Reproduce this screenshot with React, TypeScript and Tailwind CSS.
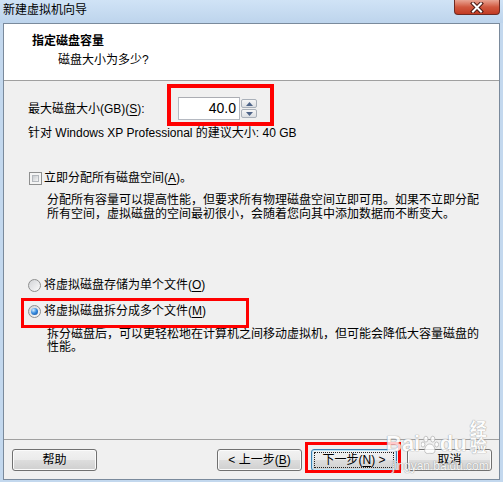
import React from "react";

const font = "font-['Liberation_Sans','Noto_Sans_CJK_SC',sans-serif]";

// underlined access key letter
const Mn = ({ k }: { k: string }) => <span className="underline decoration-1 underline-offset-[2px]">{k}</span>;

const Checkbox = () => (
  <div className="w-[13px] h-[13px] border border-[#8e8f8f] bg-[#f4f4f4] p-[2px]">
    <div className="w-full h-full border border-[#b4b8bd] bg-gradient-to-br from-[#c9ccd0] to-[#f5f5f5]" />
  </div>
);

const Radio = ({ checked = false }: { checked?: boolean }) => (
  <div className="w-[13px] h-[13px] rounded-full border border-[#8e8f8f] bg-gradient-to-br from-[#d2d4d7] to-[#fbfbfb] flex items-center justify-center">
    {checked && (
      <div className="w-[7px] h-[7px] rounded-full bg-[radial-gradient(circle_at_35%_30%,#d5efff_0%,#3a8ee0_45%,#0c4a9a_100%)]" />
    )}
  </div>
);

const WinButton = ({
  children,
  primary = false,
  className = "",
}: {
  children: React.ReactNode;
  primary?: boolean;
  className?: string;
}) => (
  <div
    className={`h-[22px] rounded-[3px] border p-[2px] bg-[linear-gradient(to_bottom,#f2f2f2_0%,#ebebeb_48%,#dddddd_52%,#cfcfcf_100%)] ${
      primary ? "border-[#3c7fb1] shadow-[inset_0_0_0_1px_#bfe6fa]" : "border-[#707070] shadow-[inset_0_0_0_1px_#fbfbfb]"
    } ${className}`}
  >
    <div
      className={`h-full flex items-center justify-center text-[12px] leading-none ${
        primary ? "border border-dotted border-[#222]" : ""
      }`}
    >
      {children}
    </div>
  </div>
);

const SpinBtn = ({ up }: { up: boolean }) => (
  <div className="w-[16px] h-[9px] rounded-[2px] border border-[#a9b0b9] bg-gradient-to-b from-[#f6f6f6] to-[#dcdfe3] flex items-center justify-center">
    <svg width="7" height="4" viewBox="0 0 7 4">
      <polygon points={up ? "3.5,0 7,4 0,4" : "0,0 7,0 3.5,4"} fill="#4e6488" />
    </svg>
  </div>
);

const Paw = () => (
  <svg width="18" height="20" viewBox="0 0 18 20" className="mx-[1px]">
    <g fill="#ffffff" stroke="#a8a8a8" strokeWidth="0.8">
      <ellipse cx="5" cy="4" rx="2.2" ry="3" />
      <ellipse cx="12" cy="4" rx="2.2" ry="3" />
      <ellipse cx="2" cy="9.5" rx="2" ry="2.6" />
      <ellipse cx="16" cy="9.5" rx="2" ry="2.6" />
      <path d="M9 9 C5 9 3 14 4 17 C5 19.5 8 18.5 9 18.5 C10 18.5 13 19.5 14 17 C15 14 13 9 9 9 Z" />
    </g>
  </svg>
);

export default function App() {
  return (
    <div className={`relative w-[503px] h-[482px] flex flex-col bg-[#c3d8ee] overflow-hidden text-[12px] text-black ${font}`}>
      {/* Title bar */}
      <div className="h-[23px] flex items-start justify-between bg-gradient-to-b from-[#d0e3f6] to-[#bdd4ec]">
        <span className="ml-[3px] mt-[2px] leading-[16px]">新建虚拟机向导</span>
        <div className="mr-[3px] w-[46px] h-[15px] rounded-b-[4px] border border-t-0 border-[#6e2a22] bg-gradient-to-b from-[#e8a493] via-[#d0583f] to-[#c23a22] flex items-center justify-center">
          <svg width="14" height="11" viewBox="0 0 14 11">
            <path d="M3 1.5 L11 9.5 M11 1.5 L3 9.5" stroke="#4a1a14" strokeWidth="4" strokeLinecap="square" />
            <path d="M3 1.5 L11 9.5 M11 1.5 L3 9.5" stroke="#ffffff" strokeWidth="2" strokeLinecap="square" />
          </svg>
        </div>
      </div>

      {/* Client area */}
      <div className="flex-1 flex flex-col mx-[3px] mb-[2px] border border-[#7a8a9c] bg-[#f0f0f0]">
        {/* Header */}
        <div className="h-[57px] shrink-0 bg-white border-b border-[#a0a0a0] pl-[28px] pt-[9px]">
          <div className="font-bold leading-[16px]">指定磁盘容量</div>
          <div className="mt-[3px] ml-[26px] leading-[16px]">磁盘大小为多少?</div>
        </div>

        {/* Body */}
        <div className="flex-1 pl-[24px]">
          <div className="mt-[16px] h-[23px] flex items-center">
            <span className="w-[150px]">
              最大磁盘大小(GB)(<Mn k="S" />):
            </span>
            <div className="w-[62px] h-[23px] border border-[#b5b9c1] border-t-[#abadb3] bg-white flex items-center justify-end pr-[3px] text-[14px]">
              40.0
            </div>
            <div className="ml-[1px] flex flex-col gap-[1px]">
              <SpinBtn up />
              <SpinBtn up={false} />
            </div>
          </div>

          <div className="mt-[5px] leading-[16px]">针对 Windows XP Professional 的建议大小: 40 GB</div>

          <div className="mt-[29px] h-[16px] flex items-center">
            <div className="ml-[1px]">
              <Checkbox />
            </div>
            <span className="ml-[2px]">
              立即分配所有磁盘空间(<Mn k="A" />)。
            </span>
          </div>
          <div className="mt-[7px] ml-[19px] leading-[14px] whitespace-nowrap">
            分配所有容量可以提高性能，但要求所有物理磁盘空间立即可用。如果不立即分配
            <br />
            所有空间，虚拟磁盘的空间最初很小，会随着您向其中添加数据而不断变大。
          </div>

          <div className="mt-[56px] h-[16px] flex items-center">
            <Radio />
            <span className="ml-[3px]">
              将虚拟磁盘存储为单个文件(<Mn k="O" />)
            </span>
          </div>
          <div className="mt-[10px] h-[16px] flex items-center">
            <Radio checked />
            <span className="ml-[3px]">
              将虚拟磁盘拆分成多个文件(<Mn k="M" />)
            </span>
          </div>
          <div className="mt-[9px] ml-[19px] leading-[13px] whitespace-nowrap">
            拆分磁盘后，可以更轻松地在计算机之间移动虚拟机，但可能会降低大容量磁盘的
            <br />
            性能。
          </div>
        </div>

        {/* Footer */}
        <div className="shrink-0 border-t border-[#a0a0a0] flex items-center pl-[8px] pr-[7px] pt-[9px] pb-[8px]">
          <WinButton className="w-[85px]">帮助</WinButton>
          <div className="flex-1" />
          <WinButton className="w-[85px] mr-[9px]">
            &lt; 上一步(<Mn k="B" />)
          </WinButton>
          <WinButton primary className="w-[86px] mr-[10px]">
            下一步(<Mn k="N" />) &gt;
          </WinButton>
          <WinButton className="w-[85px]">取消</WinButton>
        </div>
      </div>

      {/* Annotation highlights */}
      <div className="absolute left-[167px] top-[84px] w-[107px] h-[42px] border-4 border-[#ff0000] pointer-events-none" />
      <div className="absolute left-[21px] top-[298px] w-[228px] h-[30px] border-[3px] border-[#ff0000] pointer-events-none" />
      <div className="absolute left-[305px] top-[442px] w-[96px] h-[31px] border-[3px] border-[#ff0000] pointer-events-none" />

      {/* Watermark */}
      <div className="absolute left-[386px] top-[421px] pointer-events-none select-none text-white opacity-80 [text-shadow:0_0_1px_#8c8c8c,0_0_1px_#8c8c8c]">
        <div className="flex items-end font-bold text-[22px] leading-none">
          Bai
          <Paw />
          du
          <span className="ml-[3px] text-[17px]">经验</span>
        </div>
        <div className="mt-[5px] ml-[6px] text-[12px] leading-none">jingyan.baidu.com</div>
      </div>
    </div>
  );
}
